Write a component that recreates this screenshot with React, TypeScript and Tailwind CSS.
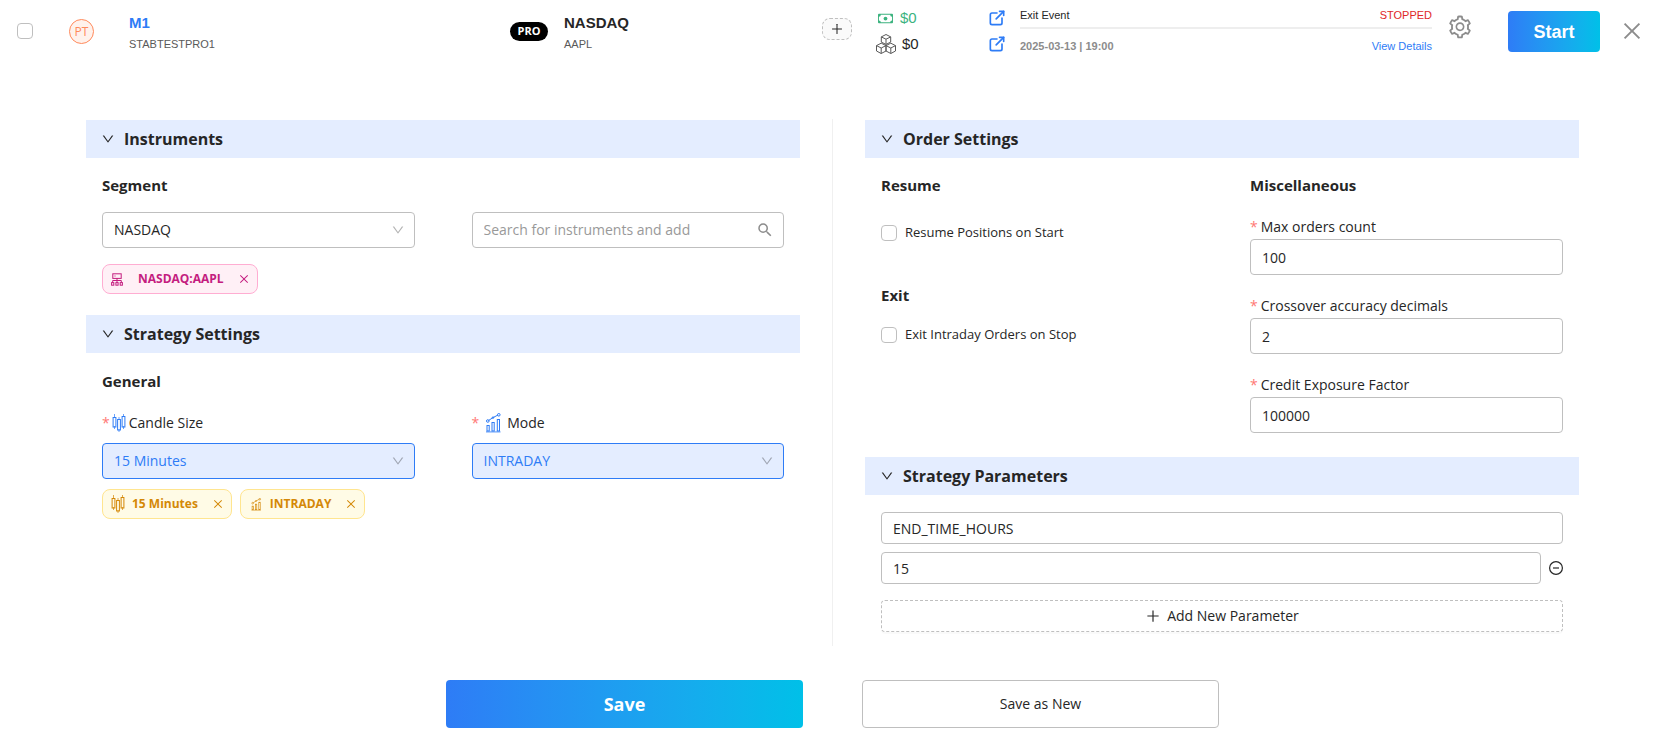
import React, { useId, useState } from "react";
import { AiOutlineClose, AiOutlineDown, AiOutlinePlus, AiOutlineSetting } from "react-icons/ai";
import { BsCash } from "react-icons/bs";
import { MdSearch } from "react-icons/md";
import { TbExternalLink } from "react-icons/tb";

function CandleIcon({ className }: { className: string }) {
  return (
    <svg viewBox="0 0 14 18" fill="none" stroke="currentColor" className={className} aria-hidden="true">
      <path d="M2.5 0v4M2.5 12v3M7 3v3M7 15v3M11.5 0v3M11.5 12v3" opacity="0.7" />
      <rect x="1.1" y="3.5" width="2.8" height="9.5" />
      <rect x="5.6" y="5.5" width="2.8" height="10.5" />
      <rect x="10.1" y="2.5" width="2.8" height="10.5" />
    </svg>
  );
}

function TrendIcon({ className }: { className: string }) {
  return (
    <svg viewBox="0 0 16 20" fill="none" stroke="currentColor" className={className} aria-hidden="true">
      <path d="M1 18.8h14.5" strokeWidth="1.8" opacity="0.5" />
      <rect x="2" y="12.5" width="2.2" height="5.5" />
      <rect x="7" y="9.5" width="2.2" height="8.5" />
      <rect x="12.3" y="6.5" width="2.2" height="11.5" />
      <path d="M3.5 7.5L8 4.6l5-2.6" />
      <circle cx="2.8" cy="8" r="1.3" />
      <circle cx="8" cy="4.6" r="0.8" />
      <circle cx="13.8" cy="1.8" r="1.3" />
    </svg>
  );
}

function NetworkIcon({ className }: { className: string }) {
  return (
    <svg viewBox="0 0 12 13" fill="none" stroke="currentColor" className={className} aria-hidden="true">
      <rect x="1.8" y="0.8" width="8.4" height="4.6" />
      <path d="M3.5 3h1M6 5.4v4M1.7 9.5V7.5h8.6v2" />
      <rect x="0.6" y="9.6" width="2.2" height="2.6" />
      <rect x="4.9" y="9.6" width="2.2" height="2.6" />
      <rect x="9.2" y="9.6" width="2.2" height="2.6" />
    </svg>
  );
}

function BoxesIcon({ className }: { className: string }) {
  return (
    <svg
      viewBox="0 0 20 20"
      fill="none"
      stroke="currentColor"
      strokeLinejoin="round"
      className={className}
      aria-hidden="true"
    >
      <path d="M10 0.5l4.7 2.4v5.2L10 10.4 5.3 8.1V2.9zM5.3 2.9L10 5.2l4.7-2.3M10 5.2v5.2" />
      <path d="M5.2 9.2l4.8 2.4v5.4l-4.8 2.5L.5 17v-5.4zM.5 11.6l4.7 2.4 4.8-2.4M5.2 14v5.5" />
      <path d="M14.8 9.2l4.7 2.4V17l-4.7 2.5L10 17v-5.4zM10 11.6l4.8 2.4 4.7-2.4M14.8 14v5.5" />
    </svg>
  );
}

function MinusCircleIcon({ className }: { className: string }) {
  return (
    <svg viewBox="0 0 14 14" fill="none" stroke="currentColor" className={className} aria-hidden="true">
      <circle cx="7" cy="7" r="6.4" strokeWidth="1.2" />
      <path d="M4 7h6" strokeWidth="1.2" />
    </svg>
  );
}

function SectionHeader({ title }: { title: string }) {
  return (
    <h2>
      <button
        type="button"
        aria-expanded="true"
        className="flex h-[38px] w-full items-center gap-[9px] bg-[#e4edff] px-[15px] text-left text-base font-bold"
      >
        <AiOutlineDown className="size-[14px]" />
        {title}
      </button>
    </h2>
  );
}

function SubTitle({ children }: { children: string }) {
  return <h3 className="text-[15px] leading-6 font-bold">{children}</h3>;
}

function Required() {
  return <span className="text-sm text-[#ff7875]">*</span>;
}

const plainBox = "border-[#bfbfbf] bg-white";
const activeBox = "border-[#2e7cf6] bg-[#e4edff] text-[#2e7cf6]";

function SelectBox({ id, label, options, active }: { id: string; label?: string; options: string[]; active?: boolean }) {
  return (
    <div className="relative">
      <select
        id={id}
        aria-label={label}
        className={`h-9 w-full appearance-none rounded border px-[11px] text-sm outline-none ${active ? activeBox : plainBox}`}
      >
        {options.map((o) => (
          <option key={o}>{o}</option>
        ))}
      </select>
      <AiOutlineDown className="pointer-events-none absolute top-[11px] right-[10px] size-[14px] text-black/30" />
    </div>
  );
}

function Tag({ tone, icon, children }: { tone: "pink" | "gold"; icon: React.ReactNode; children: string }) {
  const colors =
    tone === "pink" ? "border-[#ffadd2] bg-[#fff0f6] text-[#c41d7f]" : "border-[#ffe58f] bg-[#fffbe6] text-[#d48806]";
  return (
    <span className={`flex h-[30px] items-center rounded-lg border pr-[7px] pl-2 text-xs font-bold ${colors}`}>
      {icon}
      <span>{children}</span>
      <button type="button" aria-label={`Remove ${children}`} className="ml-[14px]">
        <AiOutlineClose className="size-3" />
      </button>
    </span>
  );
}

function NumberField({ label, initial }: { label: string; initial: string }) {
  const id = useId();
  return (
    <div>
      <label htmlFor={id} className="flex h-6 items-center gap-[3px] text-sm">
        <Required />
        {label}
      </label>
      <input
        id={id}
        defaultValue={initial}
        className="block h-9 w-full rounded border border-[#bfbfbf] px-[11px] text-sm outline-none"
      />
    </div>
  );
}

const checkClass =
  "size-4 shrink-0 appearance-none rounded border border-[#bfbfbf] bg-white checked:border-[#2e7cf6] checked:bg-[#2e7cf6]";

function TopBar() {
  return (
    <header className="grid grid-cols-[52px_60px_381fr_54px_258fr_54px_113px_31px_412fr_76px_92px_63px] pt-2 pl-[17px] font-['Liberation_Sans',Arial,sans-serif] text-[#262626]">
      <input type="checkbox" aria-label="Select M1" className={`mt-[15px] ${checkClass}`} />
      <span className="mt-[11px] flex size-[25px] items-center justify-center rounded-full border border-[#ff8a5c] bg-[#fff2ec] font-['Open_Sans',sans-serif] text-xs text-[#ff8a5c]">
        PT
      </span>
      <div className="pt-1">
        <a href="#m1" className="block text-[15px] leading-[22px] font-bold text-[#2e7cf6]">
          M1
        </a>
        <p className="text-[11px] leading-5 text-[#595959]">STABTESTPRO1</p>
      </div>
      <span className="mt-[14px] flex h-[19px] w-[38px] items-center justify-center rounded-full bg-black font-['Open_Sans',sans-serif] text-[11px] font-bold text-white">
        PRO
      </span>
      <div className="pt-1">
        <p className="text-[15px] leading-[22px] font-bold">NASDAQ</p>
        <p className="text-[11px] leading-5 text-[#595959]">AAPL</p>
      </div>
      <button
        type="button"
        aria-label="Add tag"
        className="mt-[10px] flex h-[22px] w-[30px] items-center justify-center rounded-lg border border-dashed border-[#bfbfbf] bg-[#fafafa]"
      >
        <AiOutlinePlus className="size-[14px]" />
      </button>
      <div className="text-[15px]">
        <p className="flex h-5 items-center gap-[7px] pl-[2px] text-[#3cb37f]">
          <BsCash className="size-[15px]" />
          $0
        </p>
        <p className="flex h-8 items-center gap-[6px]">
          <BoxesIcon className="size-5 text-[#595959]" />
          $0
        </p>
      </div>
      <div className="flex flex-col gap-[6px] text-[#2e7cf6]">
        <a href="#event" aria-label="Open event">
          <TbExternalLink className="-ml-[2px] size-5" />
        </a>
        <a href="#details" aria-label="Open details">
          <TbExternalLink className="-ml-[2px] size-5" />
        </a>
      </div>
      <div className="text-[11px]">
        <div className="flex h-[21px] items-center justify-between border-b-2 border-[#eeeeee] pb-1">
          <span>Exit Event</span>
          <span className="text-[#e02828]">STOPPED</span>
        </div>
        <div className="flex h-[34px] items-center justify-between">
          <span className="font-bold text-[#8c8c8c]">2025-03-13 | 19:00</span>
          <a href="#details" className="text-[#2e7cf6]">
            View Details
          </a>
        </div>
      </div>
      <button type="button" aria-label="Settings" className="mt-[6px] ml-[15px] size-[26px] text-[#8c8c8c]">
        <AiOutlineSetting className="size-[26px]" />
      </button>
      <button
        type="button"
        className="mt-[3px] h-[41px] rounded bg-linear-to-r from-[#2e7cf6] to-[#00c0e8] text-lg font-bold text-white"
      >
        Start
      </button>
      <button type="button" aria-label="Close" className="mt-[11px] ml-5 size-6 text-[#8c8c8c]">
        <AiOutlineClose className="size-6" />
      </button>
    </header>
  );
}

export default function App() {
  const [params, setParams] = useState([{ name: "END_TIME_HOURS", value: "15" }]);

  return (
    <div className="min-h-screen bg-white font-['Open_Sans',sans-serif] text-[#262626]">
      <TopBar />
      <main className="pt-[56px] pr-[84px] pl-[86px]">
        <div className="flex">
          <section className="flex-1 pt-px">
            <SectionHeader title="Instruments" />
            <div className="px-4 pt-[15px] pb-[21px]">
              <SubTitle>Segment</SubTitle>
              <div className="mt-[15px] grid grid-cols-2 gap-[57px]">
                <SelectBox id="segment" label="Segment" options={["NASDAQ", "NYSE"]} />
                <div className="flex h-9 items-center rounded border border-[#bfbfbf] pr-[9px] pl-[11px]">
                  <input
                    aria-label="Search instruments"
                    placeholder="Search for instruments and add"
                    className="w-full min-w-0 text-sm outline-none placeholder:text-[#999999]"
                  />
                  <MdSearch className="size-[18px] shrink-0 text-[#8c8c8c]" />
                </div>
              </div>
              <div className="mt-4 flex gap-2">
                <Tag tone="pink" icon={<NetworkIcon className="mr-[15px] h-[13px] w-3" />}>
                  NASDAQ:AAPL
                </Tag>
              </div>
            </div>
            <SectionHeader title="Strategy Settings" />
            <div className="px-4 pt-4">
              <SubTitle>General</SubTitle>
              <div className="mt-[14px] grid grid-cols-2 gap-[57px]">
                <div>
                  <label htmlFor="candle" className="flex h-8 items-center text-sm">
                    <Required />
                    <CandleIcon className="mr-[3px] ml-[2px] h-[18px] w-[14px] text-[#2e7cf6]" />
                    Candle Size
                  </label>
                  <div className="mt-1">
                    <SelectBox id="candle" active options={["15 Minutes", "30 Minutes"]} />
                  </div>
                </div>
                <div>
                  <label htmlFor="mode" className="flex h-8 items-center text-sm">
                    <Required />
                    <TrendIcon className="mr-[6px] ml-[6px] h-5 w-4 text-[#2e7cf6]" />
                    Mode
                  </label>
                  <div className="mt-1">
                    <SelectBox id="mode" active options={["INTRADAY", "DELIVERY"]} />
                  </div>
                </div>
              </div>
              <div className="mt-[10px] flex gap-2">
                <Tag tone="gold" icon={<CandleIcon className="mr-[7px] h-[18px] w-[14px]" />}>
                  15 Minutes
                </Tag>
                <Tag tone="gold" icon={<TrendIcon className="mr-2 ml-px h-[13px] w-3" />}>
                  INTRADAY
                </Tag>
              </div>
            </div>
          </section>

          <div className="mx-8 w-px bg-[#f0f0f0]" />

          <section className="flex-1 pt-px pb-[14px]">
            <SectionHeader title="Order Settings" />
            <div className="grid grid-cols-2 gap-14 px-4 pt-[15px] pb-6">
              <div>
                <SubTitle>Resume</SubTitle>
                <label className="mt-[25px] flex h-[22px] items-center gap-2 text-[13px]">
                  <input type="checkbox" className={checkClass} />
                  Resume Positions on Start
                </label>
                <div className="pt-[39px]">
                  <SubTitle>Exit</SubTitle>
                  <label className="mt-[17px] flex h-[22px] items-center gap-2 text-[13px]">
                    <input type="checkbox" className={checkClass} />
                    Exit Intraday Orders on Stop
                  </label>
                </div>
              </div>
              <div>
                <SubTitle>Miscellaneous</SubTitle>
                <div className="mt-[18px] flex flex-col gap-[19px]">
                  <NumberField label="Max orders count" initial="100" />
                  <NumberField label="Crossover accuracy decimals" initial="2" />
                  <NumberField label="Credit Exposure Factor" initial="100000" />
                </div>
              </div>
            </div>
            <SectionHeader title="Strategy Parameters" />
            <div className="px-4 pt-[17px]">
              {params.map((p, i) => (
                <div key={i} className="mb-4 flex flex-col gap-2">
                  <input
                    aria-label="Parameter name"
                    defaultValue={p.name}
                    className="h-8 w-full rounded border border-[#bfbfbf] px-[11px] text-sm outline-none"
                  />
                  <div className="flex items-center gap-2">
                    <input
                      aria-label="Parameter value"
                      defaultValue={p.value}
                      className="h-8 min-w-0 flex-1 rounded border border-[#bfbfbf] px-[11px] text-sm outline-none"
                    />
                    <button
                      type="button"
                      aria-label="Remove parameter"
                      onClick={() => setParams(params.filter((_, j) => j !== i))}
                    >
                      <MinusCircleIcon className="size-[14px]" />
                    </button>
                  </div>
                </div>
              ))}
              <button
                type="button"
                onClick={() => setParams([...params, { name: "", value: "" }])}
                className="flex h-8 w-full items-center justify-center gap-[6px] rounded border border-dashed border-[#bfbfbf] text-sm shadow-[0_2px_0_rgba(0,0,0,0.02)]"
              >
                <AiOutlinePlus className="size-4" />
                Add New Parameter
              </button>
            </div>
          </section>
        </div>
      </main>
      <footer className="flex justify-center gap-[59px] pt-[34px] pr-[84px] pb-[7px] pl-[86px]">
        <button
          type="button"
          className="h-12 w-[357px] rounded bg-linear-to-r from-[#2e7cf6] to-[#00c0e8] text-lg font-bold text-white"
        >
          Save
        </button>
        <button type="button" className="h-12 w-[357px] rounded border border-[#bfbfbf] bg-white text-sm">
          Save as New
        </button>
      </footer>
    </div>
  );
}
